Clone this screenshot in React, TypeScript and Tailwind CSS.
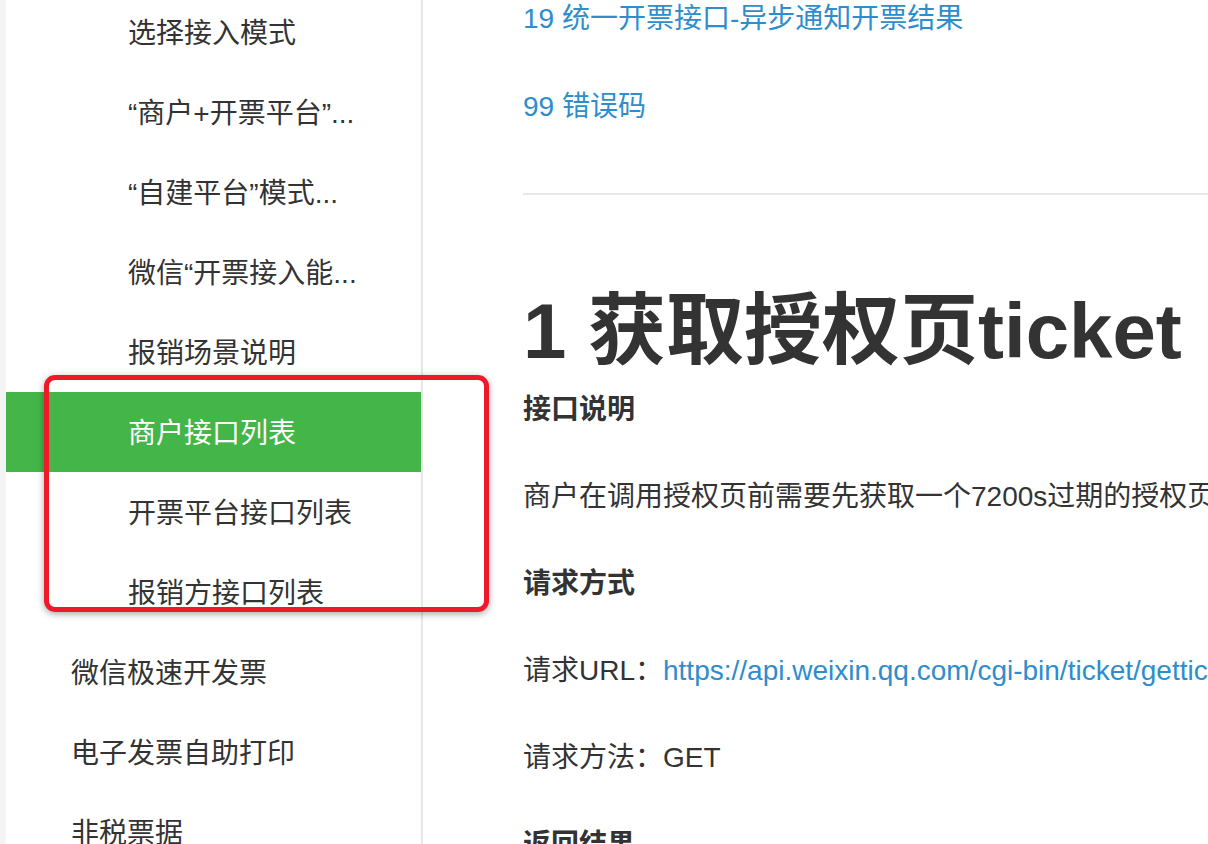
import React from "react";

const font = "font-['Liberation_Sans','Noto_Sans_CJK_SC',sans-serif]";

const navItems = [
  { text: "选择接入模式", sub: true },
  { text: "“商户+开票平台”...", sub: true },
  { text: "“自建平台”模式...", sub: true },
  { text: "微信“开票接入能...", sub: true },
  { text: "报销场景说明", sub: true },
  { text: "商户接口列表", sub: true, active: true },
  { text: "开票平台接口列表", sub: true },
  { text: "报销方接口列表", sub: true },
  { text: "微信极速开发票", sub: false },
  { text: "电子发票自助打印", sub: false },
  { text: "非税票据", sub: false },
];

const Sidebar = () => (
  <div className="w-[417px] shrink-0 bg-white border-r-2 border-[#e7e7eb] overflow-hidden">
    <div className="-mt-[8px] flex flex-col">
      {navItems.map((item, i) => (
        <div
          key={i}
          className={
            item.active
              ? "h-[80px] pt-[4px] flex items-center bg-[#44b549] text-white pl-[122px] whitespace-nowrap"
              : item.sub
              ? "h-[80px] pt-[4px] flex items-center text-[#333] pl-[122px] whitespace-nowrap"
              : "h-[80px] pt-[4px] flex items-center text-[#333] pl-[65px] whitespace-nowrap"
          }
        >
          {item.text}
        </div>
      ))}
    </div>
  </div>
);

const Content = () => (
  <div className="flex-1 min-w-0 overflow-hidden pl-[100px] text-[#333]">
    <div className="-mt-[25px]">
      {/* toc links */}
      <div className="h-[88px] flex items-center text-[#2e8dcd] whitespace-nowrap">
        19 统一开票接口-异步通知开票结果
      </div>
      <div className="h-[88px] flex items-center text-[#2e8dcd] whitespace-nowrap">
        99 错误码
      </div>
      <div className="mt-[42px] h-[2px] bg-[#e9e9e9]" />

      <h1 className="mt-[101px] h-[70px] flex items-center text-[78px] font-bold whitespace-nowrap">
        1 获取授权页ticket
      </h1>

      <div className="h-[87px] flex items-center font-bold">接口说明</div>
      <div className="h-[87px] flex items-center whitespace-nowrap">
        商户在调用授权页前需要先获取一个7200s过期的授权页ticket，在获取授权页接口中，该ticket作为参数传入，加强安全性。
      </div>
      <div className="h-[87px] flex items-center font-bold">请求方式</div>
      <div className="h-[87px] flex items-center whitespace-nowrap">
        请求URL：
        <span className="text-[#2e8dcd]">
          https://api.weixin.qq.com/cgi-bin/ticket/getticket?access_token={"{access_token}"}&amp;type=wx_card
        </span>
      </div>
      <div className="h-[87px] flex items-center">请求方法：GET</div>
      <div className="h-[87px] flex items-center font-bold">返回结果</div>
    </div>
  </div>
);

export default function App() {
  return (
    <div className={`${font} relative w-[1208px] h-[844px] overflow-hidden bg-white flex text-[28px]`}>
      {/* left gray strip */}
      <div className="w-[6px] shrink-0 bg-[#f3f4f6]" />
      <Sidebar />
      <Content />

      {/* red annotation box */}
      <div className="absolute left-[44px] top-[375px] w-[445px] h-[237px] border-[5px] border-[#ee1a2c] rounded-[11px] shadow-[0_2px_7px_rgba(0,0,0,0.35)]" />
    </div>
  );
}
